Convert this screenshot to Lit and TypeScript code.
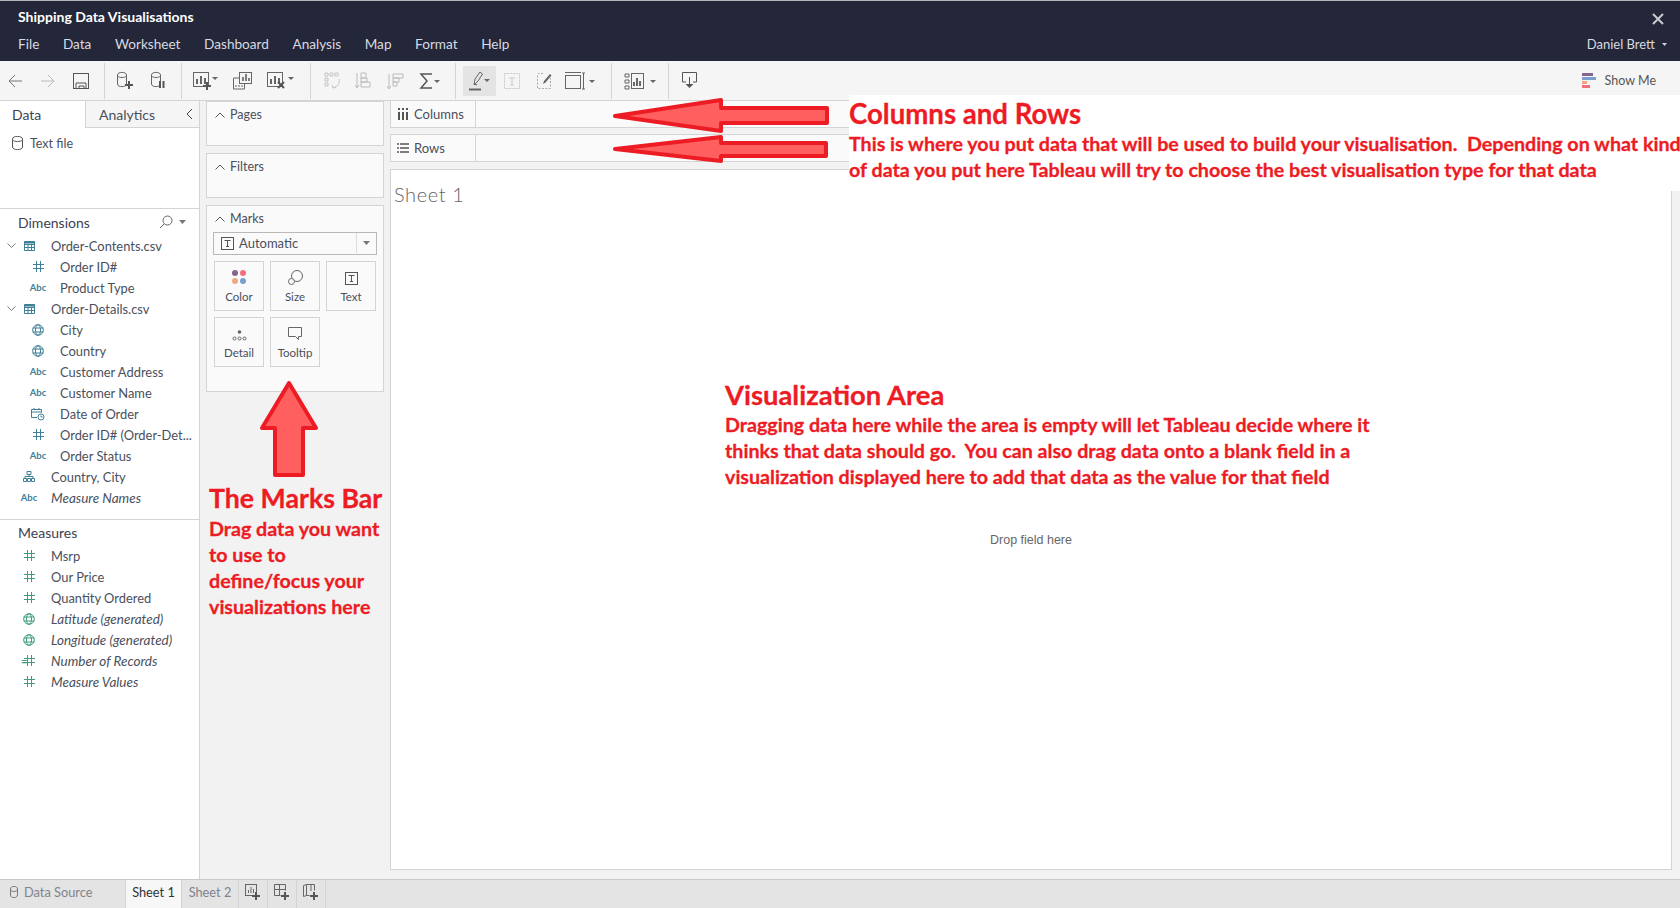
import { LitElement, html, svg, css } from 'lit';
import { customElement } from 'lit/decorators.js';

const ico = (w: number, h: number, body: unknown, color = '#666') => html`<svg
  class="ico" width=${w} height=${h} viewBox="0 0 ${w} ${h}" fill="none" stroke=${color} stroke-width="1">${body}</svg>`;

const plus = (x: number, y: number) => svg`<path d="M${x - 4} ${y}h8M${x} ${y - 4}v8" stroke="#555" stroke-width="2"/>`;
const caret = (x: number, y: number) => svg`<path d="M${x} ${y}h6l-3 3z" fill="#666" stroke="none"/>`;
const cyl = (x: number, y: number, w: number, h: number) =>
  svg`<path d="M${x + .5} ${y + 3}c0-3.500 ${w - 1}-3.500 ${w - 1} 0v${h - 6}c0 3.500-${w - 1} 3.500-${w - 1} 0zM${x + .5} ${y + 4}c2 2 ${w - 3} 2 ${w - 1} 0"/>`;
const bars = (x: number, y: number) => svg`<rect x=${x + .5} y=${y + .5} width="15" height="14"/><path d="M${x + 4} ${y + 12}v-5M${x + 8} ${y + 12}v-8M${x + 12} ${y + 12}v-6" stroke-width="2"/>`;

const icons = {
  back: ico(16, 16, svg`<path d="M15 8H2M8 2L2 8l6 6"/>`, '#777'),
  forward: ico(16, 16, svg`<path d="M1 8h13M8 2l6 6-6 6"/>`, '#bbb'),
  save: ico(16, 16, svg`<rect x=".5" y=".5" width="15" height="15"/><path d="M3 15.500V10h10v5.500M6 13h5v3H6z"/>`, '#555'),
  dsNew: ico(20, 20, svg`${cyl(1, 1, 10, 15)}${plus(13, 14)}`),
  dsPause: ico(16, 20, svg`${cyl(1, 1, 10, 15)}<path d="M10 10v7M13.500 10v7" stroke-width="2" stroke="#555"/>`),
  sheetNew: ico(26, 22, svg`${bars(1, 2)}${plus(15, 16)}${caret(20, 7)}`),
  sheetDup: ico(20, 20, svg`<rect x="6.500" y="1.500" width="12" height="11"/><path d="M10 10V6M13 10V3M16 10V7" stroke-width="1.500" stroke="#555"/><path d="M6 7H.5v11h11v-5M3 16v-2M6 16v-2M9 16v-2"/>`),
  sheetClear: ico(28, 20, svg`${bars(1, 1)}<path d="M12 11l6 6M18 11l-6 6" stroke-width="2" stroke="#555"/>${caret(22, 6)}`),
  swap: ico(18, 18, svg`<path d="M1 1h3v3H1zM6 1h3v3H6zM11 1h3v3h-3zM1 6h3v3H1zM1 11h3v3H1z"/><path d="M15 7c1 4-1 8-6 9M8 13l1 3 3-1"/>`, '#c4c4c4'),
  sortA: ico(18, 18, svg`<path d="M2 1v14M0 13l2 3 2-3M6 1h5v5H6zM6 6h6v4H6zM6 10h9v5H6z"/>`, '#bbb'),
  sortD: ico(18, 18, svg`<path d="M2 2v14M0 14l2 3 2-3M6 2h10v4H6zM6 6h6v4H6zM6 10h4v4H6z"/>`, '#bbb'),
  sigma: ico(22, 18, svg`<path d="M13 2H2l6 7-6 7h11" stroke-width="1.500"/>${caret(15, 8)}`, '#555'),
  pen: ico(22, 20, svg`<path d="M5 14l1-6 5-7 2.500 2L9 10zM5 13l3 1"/><path d="M0 18.500h12" stroke-width="2"/>${caret(15, 8)}`, '#666'),
  labelT: ico(18, 18, svg`<rect x="1.500" y="1.500" width="15" height="15" stroke-dasharray="2 1"/><path d="M6 6h6M9 6v7M7.500 13h3"/>`, '#c8c8c8'),
  annotate: ico(18, 18, svg`<path d="M1.500 3.500v13h13V6M7 1.500h-5" stroke="#aaa" stroke-dasharray="2 1.500"/><path d="M7 12l1-3 6-7 1.500 1.500-6 7z" fill="#666" stroke="none"/>`),
  fit: ico(30, 18, svg`<rect x=".5" y="3.500" width="15" height="13"/><path d="M0 .5h16M18.500 1v16M17 1h3M17 17h3"/>${caret(24, 8)}`),
  card: ico(32, 18, svg`<path d="M1 2h4v3H1zM1 8h4v3H1zM1 14h4v3H1z"/><rect x="7.500" y="1.500" width="12" height="15"/><path d="M10 14v-4M13 14V6M16 14V9" stroke-width="2"/>${caret(26, 8)}`),
  present: ico(16, 20, svg`<path d="M4 11H.5V1.500h14V11H11M7.500 6v10" stroke="#555"/><path d="M3.500 13h8l-4 4z" fill="#555" stroke="none"/>`),
  showMe: html`<svg class="ico" width="14" height="16" viewBox="0 0 14 16"><rect y="0" width="11" height="3" fill="#85648e"/><rect y="4" width="14" height="3" fill="#7b9fcf"/><rect y="8" width="5" height="3" fill="#f4a582"/><rect y="12" width="8" height="3" fill="#f2707f"/></svg>`,
  chevUp: ico(10, 6, svg`<path d="M.5 5.500L5 1l4.500 4.500"/>`, '#555'),
  chevDown: ico(9, 6, svg`<path d="M.5 .5L4.500 4.500l4-4"/>`, '#777'),
  chevLeft: ico(7, 12, svg`<path d="M6 1L1 6l5 5"/>`, '#444'),
  datasource: ico(11, 14, svg`${cyl(0, 0, 11, 14)}`, '#555'),
  datasourceSmall: ico(8, 12, svg`${cyl(0, 0, 8, 12)}`, '#777'),
  search: ico(14, 14, svg`<circle cx="8.500" cy="5.500" r="4.500"/><path d="M5 9l-4 4"/>`, '#666'),
  caretDark: html`<svg class="ico" width="7" height="4" viewBox="0 0 7 4"><path d="M0 0h7L3.500 4z" fill="#777"/></svg>`,
  close: ico(12, 12, svg`<path d="M1 1l10 10M11 1L1 11" stroke-width="2"/>`, '#c9cbd0'),
  userCaret: html`<svg class="ico" width="5" height="3" viewBox="0 0 5 3"><path d="M0 0h5L2.500 3z" fill="#d0d3da"/></svg>`,
  colsShelf: ico(12, 12, svg`<path d="M2 4v8M6 4v8M10 4v8M2 0v2M6 0v2M10 0v2" stroke-width="2"/>`, '#555'),
  rowsShelf: ico(12, 10, svg`<path d="M3 1h9M3 5h9M3 9h9M0 1h2M0 5h2M0 9h2" stroke-width="1.500"/>`, '#555'),
  tShelf: ico(13, 13, svg`<rect x=".5" y=".5" width="12" height="12"/><path d="M3.500 3.500h6M6.500 3.500v6M5 9.500h3"/>`, '#555'),
  color: html`<svg class="ico" width="15" height="15" viewBox="0 0 15 15"><circle cx="3" cy="3" r="3" fill="#85648e"/><circle cx="11" cy="3" r="3" fill="#f2707f"/><circle cx="3" cy="11" r="3" fill="#f4a582"/><circle cx="11" cy="11" r="3" fill="#7b9fcf"/></svg>`,
  size: ico(15, 15, svg`<circle cx="9" cy="6" r="5.500"/><circle cx="3.500" cy="11.500" r="3" fill="#fafafa"/>`, '#666'),
  detail: ico(15, 11, svg`<circle cx="7.500" cy="2" r="1.800" fill="#666" stroke="none"/><circle cx="2.500" cy="8.500" r="1.500"/><circle cx="7.500" cy="8.500" r="1.500"/><circle cx="12.500" cy="8.500" r="1.500"/>`, '#666'),
  tooltip: ico(15, 14, svg`<path d="M.5 .5h13v9h-3v3l-3-3H.5z"/>`, '#666'),
  addSheet: ico(16, 16, svg`<rect x=".5" y=".5" width="11" height="11"/><path d="M3.500 9V6M6 9V3M8.500 9V5"/>${plus(11, 12)}`, '#666'),
  addDash: ico(16, 16, svg`<path d="M.5 .5h11v6M.5 .5v11h6M.5 5.500h11M5.500 .5v11"/>${plus(11, 12)}`, '#666'),
  addStory: ico(16, 16, svg`<path d="M.5 1.500l3-1v11l-3 1zM3.500 .5h8v6M3.500 11.500h3M8 1v6"/>${plus(11, 12)}`, '#666'),
};

const TEAL = '#3f7f97';
const GREEN = '#3f9d7c';

const table = ico(11, 10, svg`<path d="M.5 .5h10v9H.5zM.5 3.500h10M.5 6.500h10M4 3.500v6M7.500 3.500v6"/><path d="M.5 1.500h10" stroke-width="2"/>`, TEAL);
const hash = (c: string) => ico(11, 11, svg`<path d="M3.500 0v11M7.500 0v11M0 3.500h11M0 7.500h11"/>`, c);
const globe = (c: string) => ico(12, 12, svg`<circle cx="6" cy="6" r="5.300"/><ellipse cx="6" cy="6" rx="2.500" ry="5.300"/><path d="M.7 4h10.600M.7 8h10.600"/>`, c);
const abc = html`<span class="abc">Abc</span>`;
const dateIco = ico(14, 14, svg`<path d="M6 10.500H.5v-8h10v3M.5 5h10M3 1v2M8 1v2"/><circle cx="10" cy="10" r="3"/><path d="M10 8.500V10h1.500"/>`, TEAL);
const hier = ico(12, 11, svg`<path d="M4 .5h4v3H4zM.5 7.500h3v3h-3zM4.500 7.500h3v3h-3zM8.500 7.500h3v3h-3zM6 3.500v2M2 7.500v-2h8v2"/>`, TEAL);

type Field = { icon: unknown; label: string; indent?: boolean; italic?: boolean; chev?: boolean };

const dimensions: Field[] = [
  { icon: table, label: 'Order-Contents.csv', chev: true },
  { icon: hash(TEAL), label: 'Order ID#', indent: true },
  { icon: abc, label: 'Product Type', indent: true },
  { icon: table, label: 'Order-Details.csv', chev: true },
  { icon: globe(TEAL), label: 'City', indent: true },
  { icon: globe(TEAL), label: 'Country', indent: true },
  { icon: abc, label: 'Customer Address', indent: true },
  { icon: abc, label: 'Customer Name', indent: true },
  { icon: dateIco, label: 'Date of Order', indent: true },
  { icon: hash(TEAL), label: 'Order ID# (Order-Det...', indent: true },
  { icon: abc, label: 'Order Status', indent: true },
  { icon: hier, label: 'Country, City' },
  { icon: abc, label: 'Measure Names', italic: true },
];

const measures: Field[] = [
  { icon: hash(GREEN), label: 'Msrp' },
  { icon: hash(GREEN), label: 'Our Price' },
  { icon: hash(GREEN), label: 'Quantity Ordered' },
  { icon: globe(GREEN), label: 'Latitude (generated)', italic: true },
  { icon: globe(GREEN), label: 'Longitude (generated)', italic: true },
  { icon: html`<span class="calc">=</span>${hash(GREEN)}`, label: 'Number of Records', italic: true },
  { icon: hash(GREEN), label: 'Measure Values', italic: true },
];

const menus = ['File', 'Data', 'Worksheet', 'Dashboard', 'Analysis', 'Map', 'Format', 'Help'];

@customElement('app-root')
export class AppRoot extends LitElement {
  static styles = css`
    :host {
      display: flex;
      flex-direction: column;
      width: 1680px;
      height: 908px;
      overflow: hidden;
      position: relative;
      background: #f2f2f2;
      font-family: 'Lato', 'Open Sans', sans-serif;
      font-size: 13px;
      color: #4a4f5c;
    }
    .ico { display: block; flex: none; }

    .header {
      height: 61px;
      flex: none;
      border-top: 1px solid #b5b5b5;
      background: #232739;
      box-sizing: border-box;
      padding: 0 13px 0 18px;
      position: relative;
      color: #d7dae2;
    }
    .title { font-weight: 700; font-size: 14px; color: #fff; padding-top: 7px; height: 26px; box-sizing: border-box; line-height: 17px; }
    .menubar { display: flex; align-items: center; height: 34px; font-size: 13.600px; }
    .menubar span { margin-right: 23.600px; }
    .user { margin: 0 0 0 auto; display: flex; align-items: center; gap: 7px; font-size: 13px; }
    .menubar .user span { margin: 0; }
    .close { position: absolute; top: 12px; right: 16px; }

    .toolbar {
      height: 40px;
      flex: none;
      box-sizing: border-box;
      background: #f5f5f5;
      border-bottom: 1px solid #d4d4d4;
      display: flex;
      align-items: center;
    }
    .tgroup { display: flex; align-items: center; height: 36px; box-sizing: border-box; border-right: 1px solid #d4d4d4; }
    .tgroup.last { border-right: 0; }
    .tbtn { display: flex; align-items: center; justify-content: center; height: 30px; flex: none; }
    .tbtn.active { background: #e4e4e4; }
    .showme { margin-left: auto; display: flex; align-items: center; gap: 9px; padding-right: 24px; font-size: 12.500px; color: #555; }

    .body { flex: 1; display: grid; grid-template-columns: 200px 190px 1fr; min-height: 0; }

    .data {
      background: #fff;
      border-right: 1px solid #d4d4d4;
      display: flex;
      flex-direction: column;
      min-height: 0;
    }
    .tabs { display: flex; height: 27px; flex: none; font-size: 14px; line-height: 27px; }
    .tab { width: 85px; padding-left: 12px; box-sizing: border-box; color: #3d4250; }
    .tab.off { flex: 1; padding-left: 13px; background: #f5f5f5; border-left: 1px solid #d4d4d4; border-bottom: 1px solid #d4d4d4; display: flex; align-items: center; justify-content: space-between; padding-right: 6px; color: #4a4f5c; width: auto; }
    .source { height: 81px; flex: none; box-sizing: border-box; padding: 8px 12px; display: flex; gap: 7px; align-items: flex-start; font-size: 12.500px; border-bottom: 1px solid #d4d4d4; }
    .sechead { display: flex; align-items: center; height: 25px; padding: 1px 13px 0 18px; box-sizing: border-box; font-size: 14px; color: #3d4250; flex: none; }
    .sechead.low { padding: 0 13px 1px 18px; }
    .sechead .spacer { flex: 1; }
    .sechead .ico + .ico { margin-left: 6px; }
    .fields { flex: none; height: 284px; padding-top: 1px; border-bottom: 1px solid #d4d4d4; }
    .field { display: flex; align-items: center; height: 21px; font-size: 12.900px; white-space: nowrap; padding-left: 16px; }
    .field.indent { padding-left: 25px; }
    .field.group { padding-left: 0; }
    .field.italic { font-style: italic; font-size: 13.500px; }
    .chev { width: 16px; padding-left: 7px; box-sizing: border-box; flex: none; }
    .fico { width: 26px; margin-right: 9px; display: flex; align-items: center; justify-content: center; flex: none; position: relative; }
    .abc { font-size: 9.500px; font-weight: 700; color: #3f7f97; font-style: normal; }
    .calc { position: absolute; left: 5px; color: #3f9d7c; font-size: 11px; font-weight: 700; font-style: normal; }

    .cards { padding: 0 6px; }
    .card { border: 1px solid #d4d4d4; background: #fafafa; box-sizing: border-box; margin-bottom: 7px; }
    .card.short { height: 45px; }
    .card.marks { height: 187px; padding: 0 6px; }
    .cardhead { display: flex; align-items: center; gap: 5px; height: 25px; padding-left: 8px; font-size: 12.500px; color: #4a4f5c; }
    .card.marks .cardhead { padding-left: 2px; margin-bottom: 1px; }
    .dropdown { height: 23px; border: 1px solid #b9b9b9; background: #fafafa; box-sizing: border-box; display: flex; align-items: center; padding: 0 0 1px 7px; gap: 5px; font-size: 13px; }
    .dropdown .arrow { margin-left: auto; width: 19px; height: 100%; border-left: 1px solid #ddd; display: flex; align-items: center; justify-content: center; }
    .markgrid { display: grid; grid-template-columns: repeat(3, 50px); gap: 6px; margin: 6px 0 0 1px; }
    .mark { height: 50px; border: 1px solid #d4d4d4; box-sizing: border-box; display: flex; flex-direction: column; align-items: center; font-size: 11.500px; }
    .mark .micon { height: 25px; display: flex; align-items: flex-end; padding-bottom: 2px; box-sizing: border-box; }
    .mark .mlabel { line-height: 15px; margin-top: 2px; }

    .work { display: flex; flex-direction: column; min-width: 0; position: relative; }
    .shelf { height: 28px; flex: none; background: #fafafa; border: solid #d4d4d4; border-width: 1px 0 1px 1px; display: flex; align-items: stretch; box-sizing: border-box; margin-bottom: 7px; }
    .shelf.first { height: 27px; border-top: 0; margin-bottom: 6px; }
    .shelf .slabel { width: 85px; box-sizing: border-box; border-right: 1px solid #d4d4d4; display: flex; align-items: center; gap: 5px; padding-left: 6px; font-size: 13px; }
    .viz { flex: 1; margin-right: 8px; margin-bottom: 9px; background: #fff; border: 1px solid #d4d4d4; position: relative; }
    .sheettitle { position: absolute; left: 3px; top: 12px; font-size: 20px; font-weight: 300; color: #666; letter-spacing: .6px; }
    .dropfield { position: absolute; left: 0; right: 0; top: 363px; text-align: center; font-size: 12.500px; color: #666; font-family: 'Liberation Sans', sans-serif; }

    .footer {
      height: 29px;
      flex: none;
      background: #e4e4e4;
      border-top: 1px solid #c8c8c8;
      box-sizing: border-box;
      display: flex;
      align-items: stretch;
      font-size: 12.800px;
      color: #80838c;
    }
    .ftab { display: flex; align-items: center; border-right: 1px solid #d4d4d4; box-sizing: border-box; padding-bottom: 4px; }
    .ftab.ds { width: 126px; padding-left: 10px; gap: 6px; }
    .ftab.cur { width: 56px; justify-content: center; background: #f7f7f7; color: #333; }
    .ftab.s2 { width: 57px; justify-content: center; }
    .ftab.add { width: 29px; justify-content: center; }

    .note { position: absolute; color: #ed1c24; font-family: 'Lato', 'Open Sans', sans-serif; font-weight: 700; white-space: nowrap; -webkit-text-stroke: .3px #ed1c24; }
    .note h2 { margin: 0; font-size: 27.400px; line-height: 35px; font-weight: 700; }
    .note p { margin: 0; font-size: 19.660px; line-height: 26px; }
    .annot { left: 849px; top: 95px; width: 831px; height: 96px; background: #fff; box-sizing: border-box; padding-top: 1px; }
    .annot h2 { font-size: 27.600px; }
    .vizNote { left: 725px; top: 377px; }
    .marksNote { left: 209px; top: 481px; }
    .marksNote h2 { font-size: 26.700px; }
    .arrow-svg { position: absolute; overflow: visible; }
  `;

  private field(f: Field) {
    const cls = [f.indent ? 'indent' : '', f.chev ? 'group' : '', f.italic ? 'italic' : ''].join(' ');
    return html`<div class="field ${cls}">
      ${f.chev ? html`<span class="chev">${icons.chevDown}</span>` : ''}
      <span class="fico">${f.icon}</span><span>${f.label}</span>
    </div>`;
  }

  private tool(icon: unknown, w: number, left = 0, active = false) {
    return html`<span class="tbtn ${active ? 'active' : ''}" style="margin-left:${left}px;width:${w}px">${icon}</span>`;
  }

  render() {
    return html`
      <div class="header">
        <div class="title">Shipping Data Visualisations</div>
        <div class="menubar">
          ${menus.map((m) => html`<span>${m}</span>`)}
          <div class="user"><span>Daniel Brett</span>${icons.userCaret}</div>
        </div>
        <div class="close">${icons.close}</div>
      </div>
      <div class="toolbar">
        <div class="tgroup" style="width:105px">
          ${this.tool(icons.back, 30)}${this.tool(icons.forward, 36)}${this.tool(icons.save, 30)}
        </div>
        <div class="tgroup" style="width:77px">
          ${this.tool(icons.dsNew, 36, 3)}${this.tool(icons.dsPause, 28)}
        </div>
        <div class="tgroup" style="width:129px">
          ${this.tool(icons.sheetNew, 38, 4)}${this.tool(icons.sheetDup, 38)}${this.tool(icons.sheetClear, 36)}
        </div>
        <div class="tgroup" style="width:145px">
          ${this.tool(icons.swap, 32, 6)}${this.tool(icons.sortA, 30)}${this.tool(icons.sortD, 34)}${this.tool(icons.sigma, 34)}
        </div>
        <div class="tgroup" style="width:156px">
          ${this.tool(icons.pen, 33, 7, true)}${this.tool(icons.labelT, 32)}${this.tool(icons.annotate, 34)}${this.tool(icons.fit, 36)}
        </div>
        <div class="tgroup" style="width:57px">${this.tool(icons.card, 36, 10)}</div>
        <div class="tgroup last" style="width:50px">${this.tool(icons.present, 32, 5)}</div>
        <div class="showme">${icons.showMe}<span>Show Me</span></div>
      </div>

      <div class="body">
        <div class="data">
          <div class="tabs">
            <div class="tab">Data</div>
            <div class="tab off"><span>Analytics</span>${icons.chevLeft}</div>
          </div>
          <div class="source">${icons.datasource}<span>Text file</span></div>
          <div class="sechead">Dimensions<span class="spacer"></span>${icons.search}${icons.caretDark}</div>
          <div class="fields">${dimensions.map((f) => this.field(f))}</div>
          <div class="sechead low">Measures</div>
          <div>${measures.map((f) => this.field(f))}</div>
        </div>

        <div class="cards">
          <div class="card short"><div class="cardhead">${icons.chevUp}Pages</div></div>
          <div class="card short"><div class="cardhead">${icons.chevUp}Filters</div></div>
          <div class="card marks">
            <div class="cardhead">${icons.chevUp}Marks</div>
            <div class="dropdown">${icons.tShelf}<span>Automatic</span><span class="arrow">${icons.caretDark}</span></div>
            <div class="markgrid">
              <div class="mark"><div class="micon">${icons.color}</div><div class="mlabel">Color</div></div>
              <div class="mark"><div class="micon">${icons.size}</div><div class="mlabel">Size</div></div>
              <div class="mark"><div class="micon">${icons.tShelf}</div><div class="mlabel">Text</div></div>
              <div class="mark"><div class="micon">${icons.detail}</div><div class="mlabel">Detail</div></div>
              <div class="mark"><div class="micon">${icons.tooltip}</div><div class="mlabel">Tooltip</div></div>
            </div>
          </div>
        </div>

        <div class="work">
          <div class="shelf first"><div class="slabel">${icons.colsShelf}Columns</div></div>
          <div class="shelf"><div class="slabel">${icons.rowsShelf}Rows</div></div>
          <div class="viz">
            <div class="sheettitle">Sheet 1</div>
            <div class="dropfield">Drop field here</div>
          </div>
        </div>
      </div>

      <div class="footer">
        <div class="ftab ds">${icons.datasourceSmall}<span>Data Source</span></div>
        <div class="ftab cur">Sheet 1</div>
        <div class="ftab s2">Sheet 2</div>
        <div class="ftab add">${icons.addSheet}</div>
        <div class="ftab add">${icons.addDash}</div>
        <div class="ftab add">${icons.addStory}</div>
      </div>

      <div class="note annot">
        <h2>Columns and Rows</h2>
        <p>This is where you put data that will be used to build your visualisation.&nbsp; Depending on what kind</p>
        <p>of data you put here Tableau will try to choose the best visualisation type for that data</p>
      </div>
      <svg class="arrow-svg" style="left:0;top:0" width="1" height="1">
        <path d="M615 116L721 100v8h106v15H721v8z" fill="#ff5f5f" stroke="#ed1c24" stroke-width="4" stroke-linejoin="round"/>
        <path d="M615 149L721 137v6h105v13H721v5z" fill="#ff5f5f" stroke="#ed1c24" stroke-width="4" stroke-linejoin="round"/>
      </svg>
      <svg class="arrow-svg" style="left:259px;top:380px" width="60" height="98" viewBox="0 0 60 98">
        <path d="M30 3L3 48h13v47h28V48h13z" fill="#ff5f5f" stroke="#ed1c24" stroke-width="4" stroke-linejoin="round"/>
      </svg>
      <div class="note vizNote">
        <h2>Visualization Area</h2>
        <p>Dragging data here while the area is empty will let Tableau decide where it</p>
        <p>thinks that data should go.&nbsp; You can also drag data onto a blank field in a</p>
        <p>visualization displayed here to add that data as the value for that field</p>
      </div>
      <div class="note marksNote">
        <h2>The Marks Bar</h2>
        <p>Drag data you want</p>
        <p>to use to</p>
        <p>define/focus your</p>
        <p>visualizations here</p>
      </div>
    `;
  }
}
